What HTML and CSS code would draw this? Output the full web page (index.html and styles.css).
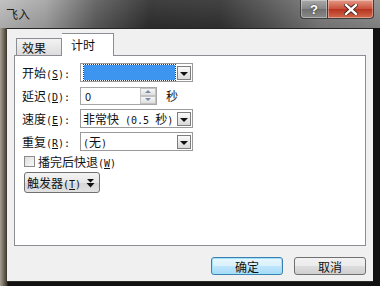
FILE: index.html
```html
<!DOCTYPE html>
<html lang="zh-CN">
<head>
  <meta charset="UTF-8" />
  <title>飞入</title>
  <link rel="stylesheet" href="styles.css">
</head>
<body>
  <div class="window">
    <!-- Title bar -->
    <div class="titlebar">
      <span class="title">飞入</span>
      <div class="caption-btns">
        <span class="cap-btn help">?</span>
        <span class="cap-btn close">
          <svg width="14" height="11" viewBox="0 0 14 11">
            <path d="M2 1 L12 10 M12 1 L2 10" stroke="#3a1a1a" stroke-width="4" stroke-linecap="square"/>
            <path d="M2 1 L12 10 M12 1 L2 10" stroke="#fff" stroke-width="2.4" stroke-linecap="square"/>
          </svg>
        </span>
      </div>
    </div>

    <div class="frame">
      <div class="dialog">
        <!-- Tabs -->
        <div class="tabs">
          <span class="tab">效果</span>
          <span class="tab active">计时</span>
        </div>

        <div class="panel">
          <div class="row">
            <span class="label">开始<span class="hw">(<u>S</u>):</span></span>
            <div class="combo">
              <div class="combo-value selected"></div>
              <span class="drop"><i></i></span>
            </div>
          </div>
          <div class="row">
            <span class="label">延迟<span class="hw">(<u>D</u>):</span></span>
            <div class="spin">
              <span class="spin-value">0</span>
              <span class="spin-btns">
                <span class="spin-up"><i></i></span>
                <span class="spin-down"><i></i></span>
              </span>
            </div>
            <span class="unit">秒</span>
          </div>
          <div class="row">
            <span class="label">速度<span class="hw">(<u>E</u>):</span></span>
            <div class="combo">
              <div class="combo-value">非常快<span class="hw"> (0.5 </span>秒<span class="hw">)</span></div>
              <span class="drop"><i></i></span>
            </div>
          </div>
          <div class="row">
            <span class="label">重复<span class="hw">(<u>R</u>):</span></span>
            <div class="combo">
              <div class="combo-value"><span class="hw">(</span>无<span class="hw">)</span></div>
              <span class="drop"><i></i></span>
            </div>
          </div>
          <label class="check-row">
            <span class="checkbox"></span>
            <span>播完后快退<span class="hw">(<u>W</u>)</span></span>
          </label>
          <div class="trigger">
            <span>触发器<span class="hw">(<u>T</u>)</span></span>
            <svg width="9" height="10" viewBox="0 0 9 10">
              <path d="M1 1 H8 L4.5 4.5 Z" fill="#111"/>
              <path d="M0.5 5 H8.5 L4.5 9.5 Z" fill="#111"/>
            </svg>
          </div>
        </div>

        <div class="actions">
          <span class="btn default">确定</span>
          <span class="btn">取消</span>
        </div>
      </div>
    </div>
  </div>
</body>
</html>
```

FILE: styles.css
```css
html, body {
  margin: 0;
  padding: 0;
}

body {
  width: 380px;
  height: 286px;
  overflow: hidden;
  font-family: "Noto Sans CJK SC", sans-serif;
  font-size: 12px;
  color: #111;
}

/* half-width latin, like the bitmap dialog font */
.hw {
  font-family: "DejaVu Sans Mono", monospace;
  font-size: 10px;
}

.window {
  display: flex;
  flex-direction: column;
  height: 286px;
  background: #1c1c1c;
}

/* Aero style title bar */
.titlebar {
  height: 28px;
  display: flex;
  align-items: flex-start;
  background:
    linear-gradient(180deg, rgba(255,255,255,0.08), rgba(0,0,0,0.1)),
    linear-gradient(90deg, #bdbdbd 0, #a4a4a4 45px, #5e5e5e 95px, #2f2f2f 150px, #333 220px, #555 270px, #7d7d7d 320px, #8c8c8c 380px);
}

.title {
  margin: 5px 0 0 6px;
  font-size: 12px;
  color: #1e1e1e;
}

.caption-btns {
  display: flex;
  margin-left: auto;
  margin-right: 6px;
}

.cap-btn {
  height: 18px;
  display: flex;
  align-items: center;
  justify-content: center;
  border: 1px solid #3d3d3d;
  border-top: none;
  box-shadow: inset 0 0 0 1px rgba(255,255,255,0.35);
}

.help {
  width: 26px;
  border-radius: 0 0 0 4px;
  background: linear-gradient(180deg, #a9a9a9, #868686 50%, #6f6f6f 51%, #8a8a8a);
  color: #fff;
  font-family: "Liberation Sans", sans-serif;
  font-weight: bold;
  font-size: 13px;
  text-shadow: 0 0 2px #222;
}

.close {
  width: 45px;
  border-left: none;
  border-radius: 0 0 4px 0;
  background: linear-gradient(180deg, #e49a86, #c9503a 50%, #b7321f 51%, #d06a4c);
}

/* Window frame */
.frame {
  flex: 1;
  display: flex;
  padding: 0 7px 4px 7px;
  background: linear-gradient(90deg, #a79f92 0, #6c6456 4px, #3b352c 7px, #111 8px, #111 100%);
}

.dialog {
  flex: 1;
  display: flex;
  flex-direction: column;
  background: #f0f0f0;
  border-top: 1px solid #262626;
  border-bottom: 1px solid #2a2f22;
  padding: 4px 7px 0 7px;
}

.tabs {
  display: flex;
  align-items: flex-end;
  padding-left: 2px;
  height: 22px;
  position: relative;
  z-index: 1;
}

.tab {
  width: 46px;
  height: 17px;
  box-sizing: border-box;
  border: 1px solid #8c8e94;
  border-bottom: none;
  background: linear-gradient(180deg, #f3f3f3, #dcdcdc);
  padding-left: 5px;
  line-height: 17px;
  font-size: 12px;
}

.tab.active {
  width: 52px;
  height: 23px;
  margin-bottom: -1px;
  background: #fff;
  border-left: none;
  padding-left: 9px;
  line-height: 22px;
}

.panel {
  height: 191px;
  box-sizing: border-box;
  border: 1px solid #8c8e94;
  background: #fff;
  padding: 7px 0 0 7px;
  display: flex;
  flex-direction: column;
  align-items: flex-start;
}

.row {
  display: flex;
  align-items: center;
  height: 19px;
  margin-bottom: 4px;
}

.label {
  width: 58px;
  font-size: 12px;
  white-space: nowrap;
}

.combo {
  width: 113px;
  height: 19px;
  box-sizing: border-box;
  border: 1px solid #9a9a9a;
  display: flex;
  align-items: center;
  padding: 1px;
  background: #fff;
}

.combo-value {
  flex: 1;
  height: 15px;
  line-height: 15px;
  padding-left: 1px;
  font-size: 12px;
  white-space: pre;
}

.combo-value.selected {
  margin-left: 2px;
  margin-right: 2px;
  background: #3d95f0;
  outline: 1px dotted #1b3a66;
}

.drop {
  width: 14px;
  height: 14px;
  box-sizing: border-box;
  border: 1px solid #7d7d7d;
  background: linear-gradient(180deg, #fafafa, #d9d9d9);
  display: flex;
  align-items: center;
  justify-content: center;
}

.drop i {
  width: 0;
  height: 0;
  border-left: 4px solid transparent;
  border-right: 4px solid transparent;
  border-top: 4px solid #111;
  margin-top: 2px;
}

.spin {
  width: 77px;
  height: 18px;
  box-sizing: border-box;
  border: 1px solid #a6a6a6;
  display: flex;
  align-items: center;
  padding-left: 4px;
}

.spin-value {
  flex: 1;
  font-size: 11px;
}

.spin-btns {
  display: flex;
  flex-direction: column;
  width: 16px;
  height: 16px;
}

.spin-btns span {
  flex: 1;
  display: flex;
  align-items: center;
  justify-content: center;
  background: linear-gradient(180deg, #f6f6f6, #e0e0e0);
  border: 1px solid #c3c3c3;
}

.spin-up i {
  border-left: 3px solid transparent;
  border-right: 3px solid transparent;
  border-bottom: 3px solid #7b8da5;
}

.spin-down i {
  border-left: 3px solid transparent;
  border-right: 3px solid transparent;
  border-top: 3px solid #7b8da5;
}

.unit {
  margin-left: 9px;
}

.check-row {
  display: flex;
  align-items: center;
  height: 18px;
  margin-top: -3px;
  padding-left: 2px;
}

.checkbox {
  width: 11px;
  height: 11px;
  box-sizing: border-box;
  border: 1px solid #8b8b8b;
  background: linear-gradient(135deg, #dedede, #f9f9f9);
  margin-right: 3px;
}

.trigger {
  margin-top: 2px;
  margin-left: 2px;
  width: 76px;
  height: 21px;
  box-sizing: border-box;
  border: 1px solid #707070;
  border-radius: 3px;
  background: linear-gradient(180deg, #f4f4f4, #e6e6e6 50%, #d6d6d6 51%, #e2e2e2);
  display: flex;
  align-items: center;
  padding-left: 2px;
  gap: 5px;
}

.actions {
  display: flex;
  justify-content: flex-end;
  gap: 11px;
  margin-top: 11px;
}

.btn {
  width: 72px;
  height: 18px;
  box-sizing: border-box;
  border: 1px solid #707070;
  border-radius: 3px;
  background: linear-gradient(180deg, #f2f2f2, #ebebeb 50%, #dddddd 51%, #cfcfcf);
  display: flex;
  align-items: center;
  justify-content: center;
  font-size: 12px;
}

.btn.default {
  border-color: #3c7fb1;
  background: linear-gradient(180deg, #eaf6fd, #d9f0fc 50%, #bee6fd 51%, #a7d9f5);
  box-shadow: inset 0 0 0 1px #9fe3fa;
}
```
